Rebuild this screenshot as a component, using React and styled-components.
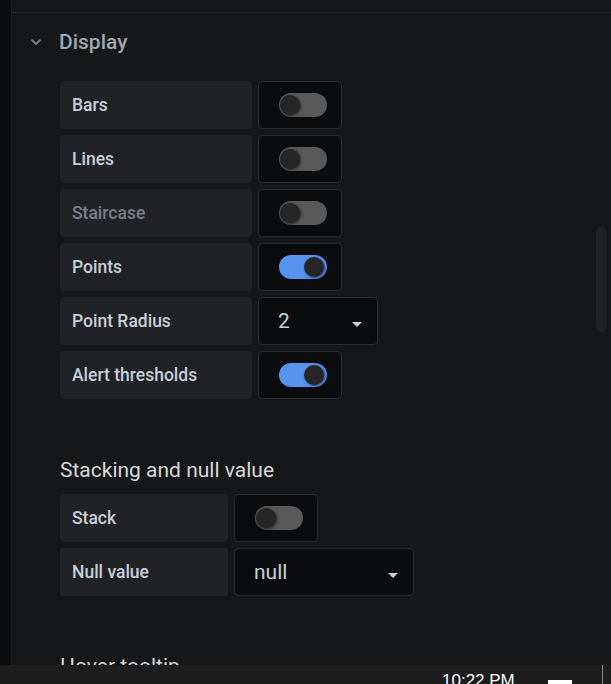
import React from 'react';
import styled, { createGlobalStyle } from 'styled-components';

const GlobalStyle = createGlobalStyle`
  html, body {
    margin: 0;
    padding: 0;
    background: #161719;
    font-family: Roboto, "Liberation Sans", sans-serif;
  }
`;

const Screen = styled.div`
  width: 611px;
  height: 684px;
  display: flex;
  flex-direction: column;
  overflow: hidden;
`;

const Window = styled.div`
  flex: 1;
  display: flex;
  min-height: 0;
  overflow: hidden;
`;

const SideStrip = styled.div`
  width: 11px;
  background: #0b0c0e;
  border-right: 1px solid #1e1f23;
`;

const Editor = styled.div`
  flex: 1;
  position: relative;
  background: #161719;
  overflow: hidden;
`;

const TopEdge = styled.div`
  height: 12px;
  border-bottom: 1px solid #25272b;
`;

const Section = styled.div`
  padding: 13px 0 0 18px;
`;

const SectionHeader = styled.div`
  display: flex;
  align-items: center;
  gap: 17px;
  height: 32px;
  color: #9fa7b3;
  font-size: 21px;
  font-weight: 500;
`;

const Body = styled.div`
  padding-left: 30px;
  padding-top: 23px;
`;

const Rows = styled.div`
  display: flex;
  flex-direction: column;
  gap: 6px;
`;

const Row = styled.div`
  display: flex;
  gap: 6px;
`;

const Label = styled.div`
  width: ${(p) => p.$width}px;
  height: 48px;
  box-sizing: border-box;
  padding-left: 12px;
  display: flex;
  align-items: center;
  background: #202226;
  border-radius: 4px;
  font-size: 17.5px;
  font-weight: 500;
  color: ${(p) => (p.$muted ? '#7b8087' : '#c7d0d9')};
`;

const Field = styled.div`
  width: ${(p) => p.$width}px;
  height: 48px;
  box-sizing: border-box;
  display: flex;
  align-items: center;
  background: #0b0c0e;
  border: 1px solid #2a2c31;
  border-radius: 4px;
`;

const ToggleField = styled(Field)`
  padding-left: 20px;
`;

const Track = styled.div`
  width: 48px;
  height: 24px;
  border-radius: 12px;
  background: ${(p) => (p.$on ? '#5794f2' : '#595959')};
  display: flex;
  align-items: center;
  justify-content: ${(p) => (p.$on ? 'flex-end' : 'flex-start')};
  padding: 0 3px 0 1px;
  box-sizing: border-box;
`;

const Knob = styled.div`
  width: 20px;
  height: 20px;
  border-radius: 50%;
  background: #262626;
  box-shadow: 1px 1px 3px rgba(0, 0, 0, 0.6);
`;

const SelectField = styled(Field)`
  padding: 0 15px 0 19px;
  justify-content: space-between;
  font-size: 21px;
  color: #c7d0d9;
`;

const Caret = styled.span`
  width: 0;
  height: 0;
  border-left: 5px solid transparent;
  border-right: 5px solid transparent;
  border-top: 5px solid #c7d0d9;
  margin-top: 6px;
`;

const SubHeading = styled.div`
  margin-top: 57px;
  margin-bottom: 10px;
  font-size: 21px;
  color: #d8d9da;
  line-height: 28px;
`;

const NextHeading = styled(SubHeading)`
  margin-top: 56px;
`;

const ScrollThumb = styled.div`
  position: absolute;
  right: 4px;
  top: 227px;
  width: 11px;
  height: 105px;
  border-radius: 6px;
  background: #202226;
`;

const Taskbar = styled.div`
  height: 19px;
  background: #1d1d1d;
  display: flex;
  align-items: flex-start;
  position: relative;
`;

const Clock = styled.div`
  margin-left: 442px;
  margin-top: 6px;
  font-family: "Liberation Sans", sans-serif;
  font-size: 17px;
  color: #ffffff;
  line-height: 20px;
`;

const NoteIcon = styled.div`
  margin-left: 33px;
  margin-top: 15px;
  width: 24px;
  height: 4px;
  background: #ffffff;
`;

const Divider = styled.div`
  margin-left: 30px;
  width: 1px;
  height: 19px;
  background: #8a8a8a;
`;

const Chevron = () => (
  <svg width="12" height="8" viewBox="0 0 12 8">
    <path d="M1.5 1.5 L6 6 L10.5 1.5" fill="none" stroke="#7b8087" strokeWidth="1.8" />
  </svg>
);

const Toggle = ({ on }) => (
  <ToggleField $width={84}>
    <Track $on={on}>
      <Knob />
    </Track>
  </ToggleField>
);

const Select = ({ width, value }) => (
  <SelectField $width={width}>
    <span>{value}</span>
    <Caret />
  </SelectField>
);

const display = [
  { label: 'Bars', on: false },
  { label: 'Lines', on: false },
  { label: 'Staircase', on: false, muted: true },
  { label: 'Points', on: true },
  { label: 'Point Radius', select: '2' },
  { label: 'Alert thresholds', on: true },
];

export default function App() {
  return (
    <Screen>
      <GlobalStyle />
      <Window>
        <SideStrip />
        <Editor>
          <TopEdge />
          <Section>
            <SectionHeader>
              <Chevron />
              Display
            </SectionHeader>
            <Body>
              <Rows>
                {display.map((r) => (
                  <Row key={r.label}>
                    <Label $width={192} $muted={r.muted}>{r.label}</Label>
                    {r.select ? <Select width={120} value={r.select} /> : <Toggle on={r.on} />}
                  </Row>
                ))}
              </Rows>
              <SubHeading>Stacking and null value</SubHeading>
              <Rows>
                <Row>
                  <Label $width={168}>Stack</Label>
                  <Toggle on={false} />
                </Row>
                <Row>
                  <Label $width={168}>Null value</Label>
                  <Select width={180} value="null" />
                </Row>
              </Rows>
              <NextHeading>Hover tooltip</NextHeading>
            </Body>
          </Section>
          <ScrollThumb />
        </Editor>
      </Window>
      <Taskbar>
        <Clock>10:22 PM</Clock>
        <NoteIcon />
        <Divider />
      </Taskbar>
    </Screen>
  );
}
